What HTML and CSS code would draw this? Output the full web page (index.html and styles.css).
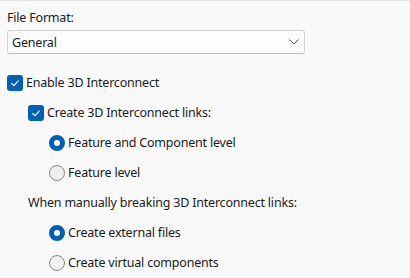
FILE: index.html
```html
<html>
<head>
<title>Export Options</title>
<link rel="stylesheet" href="styles.css">
</head>
<body>
<div class="panel">
  <div class="label">File Format:</div>
  <div class="select">
    <span>General</span>
    <svg class="chev" width="10" height="6" viewBox="0 0 10 6"><path d="M0.5 0.5 L5 5 L9.5 0.5" fill="none" stroke="#5c5c5c" stroke-width="1"/></svg>
  </div>

  <div class="row">
    <span class="check"><svg width="16" height="16" viewBox="0 0 16 16"><path d="M4.5 8.2 L7 10.6 L11.5 5.6" fill="none" stroke="#fff" stroke-width="1.2"/></svg></span>
    <span class="text">Enable 3D Interconnect</span>
  </div>
  <div class="row ind1">
    <span class="check"><svg width="16" height="16" viewBox="0 0 16 16"><path d="M4.5 8.2 L7 10.6 L11.5 5.6" fill="none" stroke="#fff" stroke-width="1.2"/></svg></span>
    <span class="text">Create 3D Interconnect links:</span>
  </div>
  <div class="row ind2">
    <span class="radio on"></span>
    <span class="text">Feature and Component level</span>
  </div>
  <div class="row ind2">
    <span class="radio"></span>
    <span class="text">Feature level</span>
  </div>
  <div class="row ind1">
    <span class="text plain">When manually breaking 3D Interconnect links:</span>
  </div>
  <div class="row ind2">
    <span class="radio on"></span>
    <span class="text">Create external files</span>
  </div>
  <div class="row ind2">
    <span class="radio"></span>
    <span class="text">Create virtual components</span>
  </div>
</div>
</body>
</html>
```

FILE: styles.css
```css
html, body{
margin:0;
padding:0;
}
body{
background:#f9f9f9;
font-family:"Noto Sans", "Open Sans", sans-serif;
font-size:12.5px;
letter-spacing:-0.2px;
color:#1b1b1b;
}
.panel{
border-top:1px solid #e3e3e3;
padding:8px 7px 0 7px;
display:flex;
flex-direction:column;
}
.label{
line-height:18px;
height:18px;
margin-bottom:3px;
}
.select{
box-sizing:border-box;
width:298px;
height:24px;
background:#fdfdfd;
border:1px solid #d4d4d4;
border-bottom-color:#bcbcbc;
border-radius:3px;
display:flex;
align-items:center;
justify-content:space-between;
padding:0 5px 0 4px;
margin-bottom:14px;
}
.row{
height:30px;
display:flex;
align-items:center;
}
.ind1{
padding-left:21px;
}
.ind2{
padding-left:42px;
}
.check{
width:16px;
height:16px;
border-radius:3px;
background:#005fb8;
display:flex;
}
.radio{
box-sizing:border-box;
width:16px;
height:16px;
border-radius:50%;
border:1px solid #8a8a8a;
background:#efefef;
}
.radio.on{
border:5px solid #005fb8;
background:#fff;
}
.text{
margin-left:3px;
line-height:18px;
}
.text.plain{
margin-left:0;
}
```
